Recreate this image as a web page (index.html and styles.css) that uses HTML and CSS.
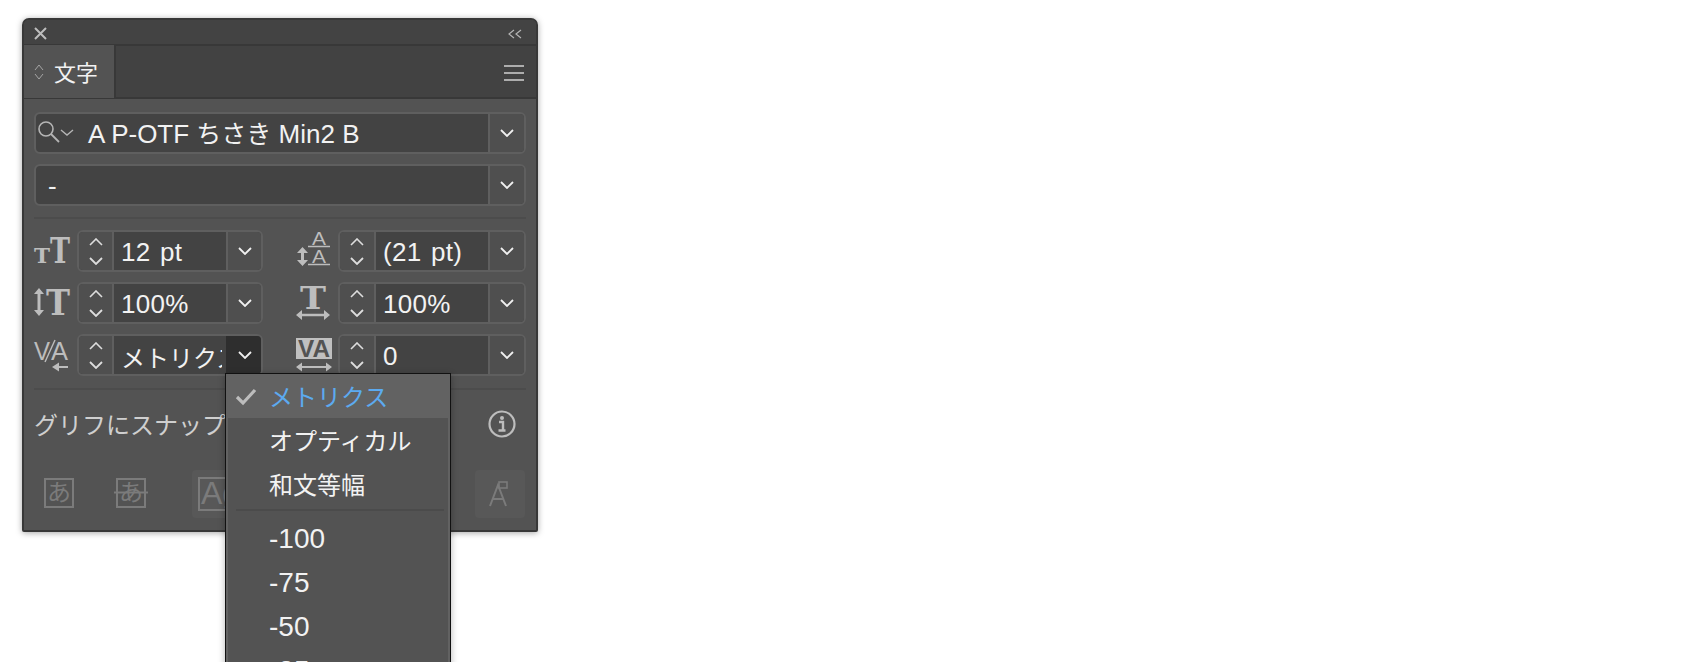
FILE: index.html
```html
<!DOCTYPE html>
<html lang="ja">
<head>
<meta charset="utf-8">
<title>文字</title>
<link rel="stylesheet" href="styles.css">
</head>
<body>
<svg class="sprite" width="0" height="0">
  <symbol id="chev" viewBox="0 0 14 8"><path d="M1 1l6 6 6-6" fill="none" stroke="currentColor" stroke-width="1.8"/></symbol>
  <symbol id="up" viewBox="0 0 14 8"><path d="M1 7l6-6 6 6" fill="none" stroke="currentColor" stroke-width="1.6"/></symbol>
</svg>
<div class="panel">
  <div class="titlebar">
    <svg class="close" width="13" height="13" viewBox="0 0 13 13"><path d="M1 1l11 11M12 1L1 12" stroke="#bdbdbd" stroke-width="2" fill="none"/></svg>
    <svg class="collapse" width="14" height="10" viewBox="0 0 14 10"><path d="M6 1L1 5l5 4M13 1L8 5l5 4" stroke="#b5b5b5" stroke-width="1.2" fill="none"/></svg>
  </div>
  <div class="tabrow">
    <div class="tab">
      <svg class="tabarrows" width="10" height="18" viewBox="0 0 10 18"><path d="M1 7l4-5 4 5M1 11l4 5 4-5" stroke="#a5a5a5" stroke-width="1" fill="none"/></svg>
      <span>文字</span>
    </div>
    <svg class="hamburger" width="20" height="16" viewBox="0 0 20 16"><path d="M0 1h20M0 8h20M0 15h20" stroke="#adadad" stroke-width="2"/></svg>
  </div>
  <div class="body">
    <div class="field wide">
      <svg class="search" width="42" height="28" viewBox="0 0 42 28"><circle cx="9" cy="10" r="7" fill="none" stroke="#b5b5b5" stroke-width="1.6"/><path d="M14 15l8 8" stroke="#b5b5b5" stroke-width="1.8"/><path d="M24 11l6 5 6-5" stroke="#b5b5b5" stroke-width="1.4" fill="none"/></svg>
      <div class="value fontname"><span>A P-OTF <span class="kana">ちさき</span> Min2 B</span></div>
      <div class="drop"><svg width="14" height="8"><use href="#chev"/></svg></div>
    </div>
    <div class="field wide">
      <div class="value style">-</div>
      <div class="drop"><svg width="14" height="8"><use href="#chev"/></svg></div>
    </div>
    <div class="divider"></div>
    <div class="grid">
      <div class="cell">
        <svg class="glyph" width="40" height="42" viewBox="0 0 40 42"><text x="0" y="33" class="t" font-size="20" textLength="16" lengthAdjust="spacingAndGlyphs">T</text><text x="16" y="33" class="t" font-size="36" textLength="20" lengthAdjust="spacingAndGlyphs">T</text></svg>
        <div class="field"><div class="step"><svg width="14" height="8"><use href="#up"/></svg><svg width="14" height="8"><use href="#chev"/></svg></div><div class="value">12 pt</div><div class="drop"><svg width="14" height="8"><use href="#chev"/></svg></div></div>
      </div>
      <div class="cell">
        <svg class="glyph" width="40" height="42" viewBox="0 0 40 42"><text x="17" y="15" class="a" font-size="18" textLength="14" lengthAdjust="spacingAndGlyphs">A</text><path d="M13 16.500h22M13 34.500h22" stroke="#bdbdbd" stroke-width="1.500"/><text x="17" y="33" class="a" font-size="18" textLength="14" lengthAdjust="spacingAndGlyphs">A</text><path d="M7.500 21v11" stroke="#bdbdbd" stroke-width="3"/><path d="M2 23l5.500-6 5.500 6zM2 30l5.500 6 5.500-6z" fill="#bdbdbd"/></svg>
        <div class="field"><div class="step"><svg width="14" height="8"><use href="#up"/></svg><svg width="14" height="8"><use href="#chev"/></svg></div><div class="value">(21 pt)</div><div class="drop"><svg width="14" height="8"><use href="#chev"/></svg></div></div>
      </div>
      <div class="cell">
        <svg class="glyph" width="40" height="42" viewBox="0 0 40 42"><path d="M5 11v18" stroke="#bdbdbd" stroke-width="3"/><path d="M0 12l5-6 5 6zM0 28l5 6 5-6z" fill="#bdbdbd"/><text x="12" y="33" class="t" font-size="36" textLength="24" lengthAdjust="spacingAndGlyphs">T</text></svg>
        <div class="field"><div class="step"><svg width="14" height="8"><use href="#up"/></svg><svg width="14" height="8"><use href="#chev"/></svg></div><div class="value">100%</div><div class="drop"><svg width="14" height="8"><use href="#chev"/></svg></div></div>
      </div>
      <div class="cell">
        <svg class="glyph" width="40" height="42" viewBox="0 0 40 42"><text x="5" y="27" class="t" font-size="32" textLength="26" lengthAdjust="spacingAndGlyphs">T</text><path d="M5 33h26" stroke="#bdbdbd" stroke-width="2.500"/><path d="M7 28l-6 5 6 5zM29 28l6 5-6 5z" fill="#bdbdbd"/></svg>
        <div class="field"><div class="step"><svg width="14" height="8"><use href="#up"/></svg><svg width="14" height="8"><use href="#chev"/></svg></div><div class="value">100%</div><div class="drop"><svg width="14" height="8"><use href="#chev"/></svg></div></div>
      </div>
      <div class="cell">
        <svg class="glyph" width="40" height="42" viewBox="0 0 40 42"><text x="0" y="26" class="a" font-size="25" textLength="16" lengthAdjust="spacingAndGlyphs">V</text><path d="M11 28L21 6" stroke="#bdbdbd" stroke-width="1.400"/><text x="17" y="26" class="a" font-size="25" textLength="17" lengthAdjust="spacingAndGlyphs">A</text><path d="M22 33h12" stroke="#bdbdbd" stroke-width="2"/><path d="M25 28.500l-7 4.500 7 4.500z" fill="#bdbdbd"/></svg>
        <div class="field"><div class="step"><svg width="14" height="8"><use href="#up"/></svg><svg width="14" height="8"><use href="#chev"/></svg></div><div class="value ja">メトリクス</div><div class="drop active"><svg width="14" height="8"><use href="#chev"/></svg></div></div>
      </div>
      <div class="cell">
        <svg class="glyph" width="40" height="42" viewBox="0 0 40 42"><rect x="1" y="4" width="36" height="21" fill="#c0c0c0"/><text x="3" y="23" class="va" font-size="23" textLength="32" lengthAdjust="spacingAndGlyphs">VA</text><path d="M5 33h28" stroke="#bdbdbd" stroke-width="2"/><path d="M7 28.500l-6 4.500 6 4.500zM31 28.500l6 4.500-6 4.500z" fill="#bdbdbd"/></svg>
        <div class="field"><div class="step"><svg width="14" height="8"><use href="#up"/></svg><svg width="14" height="8"><use href="#chev"/></svg></div><div class="value">0</div><div class="drop"><svg width="14" height="8"><use href="#chev"/></svg></div></div>
      </div>
    </div>
    <div class="divider second"></div>
    <div class="snap">
      <span>グリフにスナップ</span>
      <svg width="30" height="30" viewBox="0 0 30 30"><circle cx="15" cy="15" r="12.500" fill="none" stroke="#bdbdbd" stroke-width="2.200"/><circle cx="15" cy="9" r="2" fill="#bdbdbd"/><path d="M12 13h4v8M11.500 21.500h7" stroke="#bdbdbd" stroke-width="2.400" fill="none"/></svg>
    </div>
    <div class="tools">
      <div class="tool"><svg width="30" height="30" viewBox="0 0 30 30"><rect x="1" y="1" width="28" height="28" fill="none" stroke="#7b7b7b" stroke-width="2"/><text x="15" y="23" class="dim">あ</text></svg></div>
      <div class="tool"><svg width="34" height="30" viewBox="0 0 34 30"><rect x="3" y="1" width="28" height="28" fill="none" stroke="#7b7b7b" stroke-width="2"/><text x="17" y="23" class="dim">あ</text><path d="M0 14.500h34" stroke="#7b7b7b" stroke-width="2"/></svg></div>
      <div class="tool on third"><svg width="46" height="38" viewBox="0 0 46 38"><rect x="5" y="3" width="40" height="32" fill="none" stroke="#7b7b7b" stroke-width="2"/><text x="7" y="29" class="ag">Ag</text></svg></div>
      <div class="tool on last"><svg width="24" height="26" viewBox="0 0 24 26"><rect x="11" y="1" width="8" height="6" fill="none" stroke="#7b7b7b" stroke-width="1.600"/><path d="M2 25L10 4l8 21M5 18h10" fill="none" stroke="#7b7b7b" stroke-width="2"/></svg></div>
    </div>
  </div>
  <div class="menu">
    <div class="item current"><svg width="22" height="18" viewBox="0 0 22 18"><path d="M2 9l6 6L20 2" fill="none" stroke="#bdbdbd" stroke-width="3.200"/></svg><span>メトリクス</span></div>
    <div class="item"><span>オプティカル</span></div>
    <div class="item"><span>和文等幅</span></div>
    <div class="sep"></div>
    <div class="item num"><span>-100</span></div>
    <div class="item num"><span>-75</span></div>
    <div class="item num"><span>-50</span></div>
    <div class="item num"><span>-25</span></div>
  </div>
</div>
</body>
</html>
```

FILE: styles.css
```css
html, body {
  margin: 0;
  height: 100%;
  overflow: hidden;
  background: #fff;
}
body {
  padding: 18px 0 0 22px;
  box-sizing: border-box;
  font-family: "Liberation Sans", "Noto Sans CJK JP", sans-serif;
  color: #f2f2f2;
}
.sprite { position: absolute; }
.panel {
  position: relative;
  width: 516px;
  height: 514px;
  box-sizing: border-box;
  border: 2px solid #383838;
  border-radius: 7px 7px 2px 2px;
  background: #535353;
  box-shadow: 0 1px 6px rgba(0, 0, 0, .35);
}
.titlebar {
  height: 26px;
  box-sizing: border-box;
  display: flex;
  align-items: center;
  justify-content: space-between;
  padding: 3px 14px 0 10px;
  background: #434343;
  border-bottom: 2px solid #383838;
  border-radius: 5px 5px 0 0;
}
.tabrow {
  height: 53px;
  box-sizing: border-box;
  display: flex;
  justify-content: space-between;
  align-items: center;
  background: #424242;
  border-bottom: 2px solid #383838;
  padding-right: 12px;
}
.tab {
  width: 92px;
  height: 53px;
  box-sizing: border-box;
  display: flex;
  align-items: center;
  gap: 10px;
  padding: 0 0 2px 10px;
  background: #535353;
  border-right: 2px solid #383838;
  font-size: 22px;
}
.tabarrows { margin-top: 3px; }
.hamburger { margin-top: 3px; }
.body { padding: 13px 10px 0 10px; }
.field {
  flex: 1;
  height: 42px;
  box-sizing: border-box;
  display: flex;
  align-items: stretch;
  border: 2px solid #5f5f5f;
  border-radius: 6px;
  background: #434343;
  overflow: hidden;
}
.wide { margin-bottom: 10px; }
.wide:nth-child(2) { margin-bottom: 0; }
.search { align-self: center; margin-left: 1px; flex: none; }
.value {
  flex: 1;
  min-width: 0;
  display: flex;
  align-items: center;
  padding: 2px 0 0 7px;
  font-size: 26px;
  letter-spacing: .3px;
  word-spacing: 2px;
  white-space: nowrap;
  overflow: hidden;
}
.value.fontname { padding: 0 0 3px 9px; letter-spacing: 0; word-spacing: 0; }
.kana { font-size: 25px; }
.value.style { padding-left: 12px; }
.value.ja { font-size: 24px; margin-right: 4px; letter-spacing: 0; }
.drop {
  flex: none;
  width: 33px;
  display: flex;
  align-items: center;
  justify-content: center;
  background: #4f4f4f;
  border-left: 2px solid #5f5f5f;
  color: #f0f0f0;
}
.wide .drop { width: 34px; }
.cell:nth-child(even) .drop { width: 34px; }
.drop.active { background: #2e2e2e; border-left-color: #2e2e2e; }
.step {
  flex: none;
  width: 33px;
  display: flex;
  flex-direction: column;
  align-items: center;
  justify-content: center;
  gap: 11px;
  background: #4f4f4f;
  border-right: 2px solid #5f5f5f;
  color: #ddd;
}
.cell:nth-child(even) .step { width: 34px; }
.divider {
  height: 2px;
  margin: 11px 0;
  background: #4c4c4c;
}
.divider.second { margin: 12px 0 0; }
.grid {
  display: grid;
  grid-template-columns: 229px 231px;
  column-gap: 32px;
  row-gap: 10px;
}
.cell { display: flex; align-items: center; }
.glyph { flex: none; margin-right: 3px; overflow: visible; }
.t {
  font-family: "DejaVu Serif", serif;
  font-weight: 700;
  fill: #bdbdbd;
}
.a {
  font-family: "Liberation Sans", sans-serif;
  fill: #bdbdbd;
}
.va {
  font-family: "Liberation Sans", sans-serif;
  font-weight: 700;
  fill: #535353;
}
.snap {
  height: 70px;
  box-sizing: border-box;
  display: flex;
  align-items: center;
  justify-content: space-between;
  padding: 0 9px 3px 0;
  font-size: 24px;
  color: #cfcfcf;
}
.tools { margin-top: 10px; display: flex; }
.tool {
  width: 50px;
  height: 48px;
  box-sizing: border-box;
  padding-bottom: 3px;
  display: flex;
  align-items: center;
  justify-content: center;
  border-radius: 4px;
}
.tool + .tool { margin-left: 22px; }
.tool.on { background: #585858; padding-bottom: 0; }
.tool.third { margin-left: 36px; }
.tool.last { margin-left: auto; margin-right: 1px; }
.dim {
  font-family: "Noto Sans CJK JP", sans-serif;
  font-size: 24px;
  text-anchor: middle;
  fill: #7b7b7b;
}
.ag {
  font-family: "Liberation Sans", sans-serif;
  font-size: 32px;
  fill: #7b7b7b;
}
.menu {
  position: absolute;
  left: 201px;
  top: 353px;
  width: 226px;
  box-sizing: border-box;
  border: 1px solid #111;
  padding: 0 2px;
  background: #626262;
  box-shadow: 0 2px 7px rgba(0, 0, 0, .3);
}
.item {
  position: relative;
  height: 44px;
  box-sizing: border-box;
  display: flex;
  align-items: center;
  padding: 0 0 2px 41px;
  background: #535353;
  font-size: 24px;
}
.item.current {
  margin: 0 -2px;
  padding-left: 43px;
  background: #626262;
  color: #5caaf0;
}
.item.current svg {
  position: absolute;
  left: 9px;
  top: 14px;
}
.item.num { font-size: 28px; }
.sep {
  height: 12px;
  background: linear-gradient(#4b4b4b, #4b4b4b) no-repeat 8px 3px / 208px 2px #535353;
}
```
